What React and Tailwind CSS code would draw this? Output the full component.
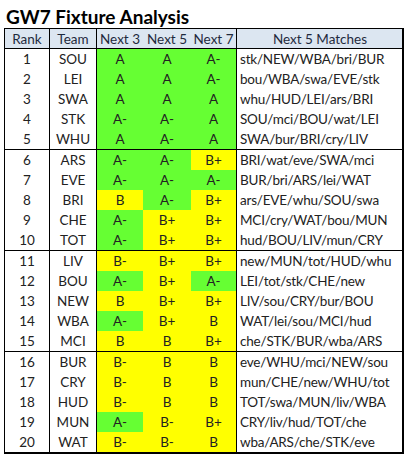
import React from "react";

const rows = [
  [1, "SOU", "A", "A", "A-", "stk/NEW/WBA/bri/BUR"],
  [2, "LEI", "A", "A", "A-", "bou/WBA/swa/EVE/stk"],
  [3, "SWA", "A", "A", "A", "whu/HUD/LEI/ars/BRI"],
  [4, "STK", "A-", "A-", "A", "SOU/mci/BOU/wat/LEI"],
  [5, "WHU", "A", "A-", "A", "SWA/bur/BRI/cry/LIV"],
  [6, "ARS", "A-", "A-", "B+", "BRI/wat/eve/SWA/mci"],
  [7, "EVE", "A-", "A-", "A-", "BUR/bri/ARS/lei/WAT"],
  [8, "BRI", "B", "A-", "B+", "ars/EVE/whu/SOU/swa"],
  [9, "CHE", "A-", "B+", "B+", "MCI/cry/WAT/bou/MUN"],
  [10, "TOT", "A-", "B+", "B+", "hud/BOU/LIV/mun/CRY"],
  [11, "LIV", "B-", "B+", "B+", "new/MUN/tot/HUD/whu"],
  [12, "BOU", "A-", "B+", "A-", "LEI/tot/stk/CHE/new"],
  [13, "NEW", "B", "B+", "B+", "LIV/sou/CRY/bur/BOU"],
  [14, "WBA", "A-", "B+", "B", "WAT/lei/sou/MCI/hud"],
  [15, "MCI", "B", "B", "B+", "che/STK/BUR/wba/ARS"],
  [16, "BUR", "B-", "B", "B", "eve/WHU/mci/NEW/sou"],
  [17, "CRY", "B-", "B", "B", "mun/CHE/new/WHU/tot"],
  [18, "HUD", "B-", "B", "B", "TOT/swa/MUN/liv/WBA"],
  [19, "MUN", "A-", "B-", "B+", "CRY/liv/hud/TOT/che"],
  [20, "WAT", "B-", "B-", "B", "wba/ARS/che/STK/eve"],
];

const cols = "grid grid-cols-[45px_47px_46px_48px_46px_166px]";

function Grade({ g, last }) {
  const bg = g.startsWith("A") ? "bg-[#66ff33]" : "bg-[#ffff00]";
  return (
    <div className={`${bg} h-5 flex items-center justify-center ${last ? "border-r border-black" : ""}`}>
      {g}
    </div>
  );
}

export default function App() {
  const groups = [0, 1, 2, 3].map((i) => rows.slice(i * 5, i * 5 + 5));
  return (
    <div className="w-[410px] h-[458px] bg-white text-[#222] font-['Lato',sans-serif] text-[13.5px] leading-5">
      <h1 className="pl-[6px] pt-[5px] h-[28px] text-[19px] leading-6 font-bold text-black">
        GW7 Fixture Analysis
      </h1>
      <div className="ml-[4px] w-[400px] border border-black border-r-2 border-b-2">
        <div className={`${cols} bg-[#dce6f1] text-[#1f2a3d] border-b border-black h-5`}>
          <div className="text-center border-r border-black">Rank</div>
          <div className="text-center border-r border-black">Team</div>
          <div className="text-center">Next 3</div>
          <div className="text-center">Next 5</div>
          <div className="text-center border-r border-black">Next 7</div>
          <div className="text-center">Next 5 Matches</div>
        </div>
        {groups.map((grp, gi) => (
          <div key={gi} className={gi < 3 ? "border-b border-black" : ""}>
            {grp.map(([rank, team, n3, n5, n7, m]) => (
              <div key={rank} className={`${cols} h-5`}>
                <div className="text-center border-r border-black">{rank}</div>
                <div className="text-center border-r border-black">{team}</div>
                <Grade g={n3} />
                <Grade g={n5} />
                <Grade g={n7} last />
                <div className="pl-[3px] whitespace-nowrap tracking-[-0.2px]">{m}</div>
              </div>
            ))}
          </div>
        ))}
      </div>
    </div>
  );
}
